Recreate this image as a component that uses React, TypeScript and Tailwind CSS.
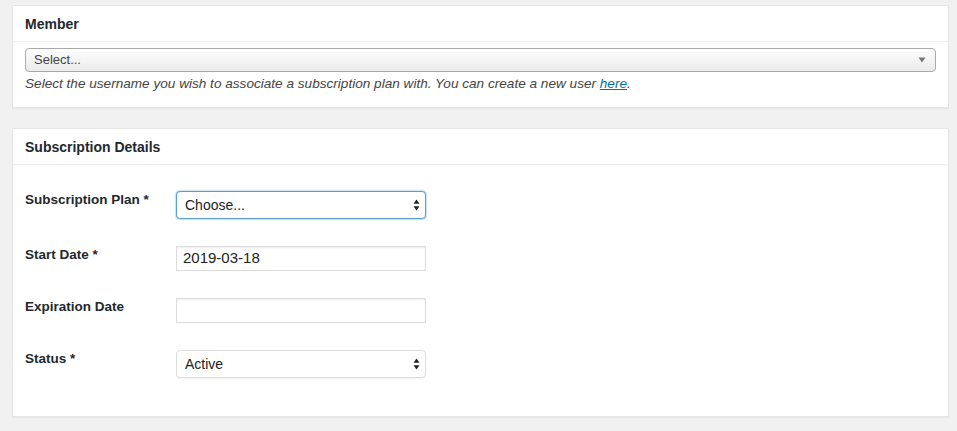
import React from 'react';

const font = { fontFamily: '"Liberation Sans", Arial, sans-serif' };

function UpDown() {
  return (
    <svg width="7" height="12" viewBox="0 0 7 12" className="shrink-0">
      <path d="M3.5 0.5 L6.5 4.8 L0.5 4.8 Z" fill="#222" />
      <path d="M3.5 11.5 L6.5 7.2 L0.5 7.2 Z" fill="#222" />
    </svg>
  );
}

function Panel({ title, children, className }: { title: string; children: React.ReactNode; className?: string }) {
  return (
    <div className={`bg-white border border-[#e5e5e5] shadow-[0_1px_1px_rgba(0,0,0,0.04)] ${className ?? ''}`}>
      <div className="h-[36px] px-3 flex items-center border-b border-[#eeeeee]">
        <h2 className="text-[14px] font-bold text-[#23282d] leading-none">{title}</h2>
      </div>
      {children}
    </div>
  );
}

function Row({ label, children, height }: { label: string; children: React.ReactNode; height: string }) {
  return (
    <div className={`flex items-start ${height}`}>
      <div className="w-[151px] shrink-0 pt-[1px] text-[13.5px] font-bold text-[#23282d] leading-[16px]">{label}</div>
      {children}
    </div>
  );
}

export default function App() {
  return (
    <div className="min-h-screen bg-[#f1f1f1] px-3 pt-[5px] pb-4 w-[957px]" style={font}>
      <div className="w-[937px]">
        <Panel title="Member">
          <div className="px-3 pt-[6px] pb-[14px]">
            <div className="h-[24px] rounded-[4px] border border-[#aaaaaa] bg-gradient-to-b from-white via-[#f4f4f4] to-[#ececec] flex items-center pl-2 pr-[9px] justify-between">
              <span className="text-[13px] text-[#444]">Select...</span>
              <svg width="8" height="6" viewBox="0 0 8 6">
                <path d="M0.5 0.5 L7.5 0.5 L4 5.5 Z" fill="#777" />
              </svg>
            </div>
            <p className="mt-[3px] text-[13.6px] italic text-[#444] leading-[18px]">
              Select the username you wish to associate a subscription plan with. You can create a new user{' '}
              <a className="text-[#0073aa] underline" href="#">here</a>.
            </p>
          </div>
        </Panel>

        <Panel title="Subscription Details" className="mt-[20px]">
          <div className="px-3 pt-[26px] pb-[38px]">
            <Row label="Subscription Plan *" height="h-[55px]">
              <div className="w-[250px] h-[28px] rounded-[4px] border border-[#5b9dd9] shadow-[0_0_2px_rgba(30,140,190,0.8)] bg-white flex items-center justify-between pl-2 pr-[5px]">
                <span className="text-[14px] text-[#222]">Choose...</span>
                <UpDown />
              </div>
            </Row>
            <Row label="Start Date *" height="h-[52px]">
              <div className="w-[250px] h-[25px] border border-[#dddddd] shadow-[inset_0_1px_2px_rgba(0,0,0,0.07)] bg-white flex items-center px-[6px]">
                <span className="text-[15px] text-[#222]">2019-03-18</span>
              </div>
            </Row>
            <Row label="Expiration Date" height="h-[52px]">
              <div className="w-[250px] h-[25px] border border-[#dddddd] shadow-[inset_0_1px_2px_rgba(0,0,0,0.07)] bg-white" />
            </Row>
            <Row label="Status *" height="h-[28px]">
              <div className="w-[250px] h-[28px] rounded-[4px] border border-[#dddddd] shadow-[0_1px_1px_rgba(0,0,0,0.05)] bg-white flex items-center justify-between pl-2 pr-[5px]">
                <span className="text-[14px] text-[#222]">Active</span>
                <UpDown />
              </div>
            </Row>
          </div>
        </Panel>
      </div>
    </div>
  );
}
